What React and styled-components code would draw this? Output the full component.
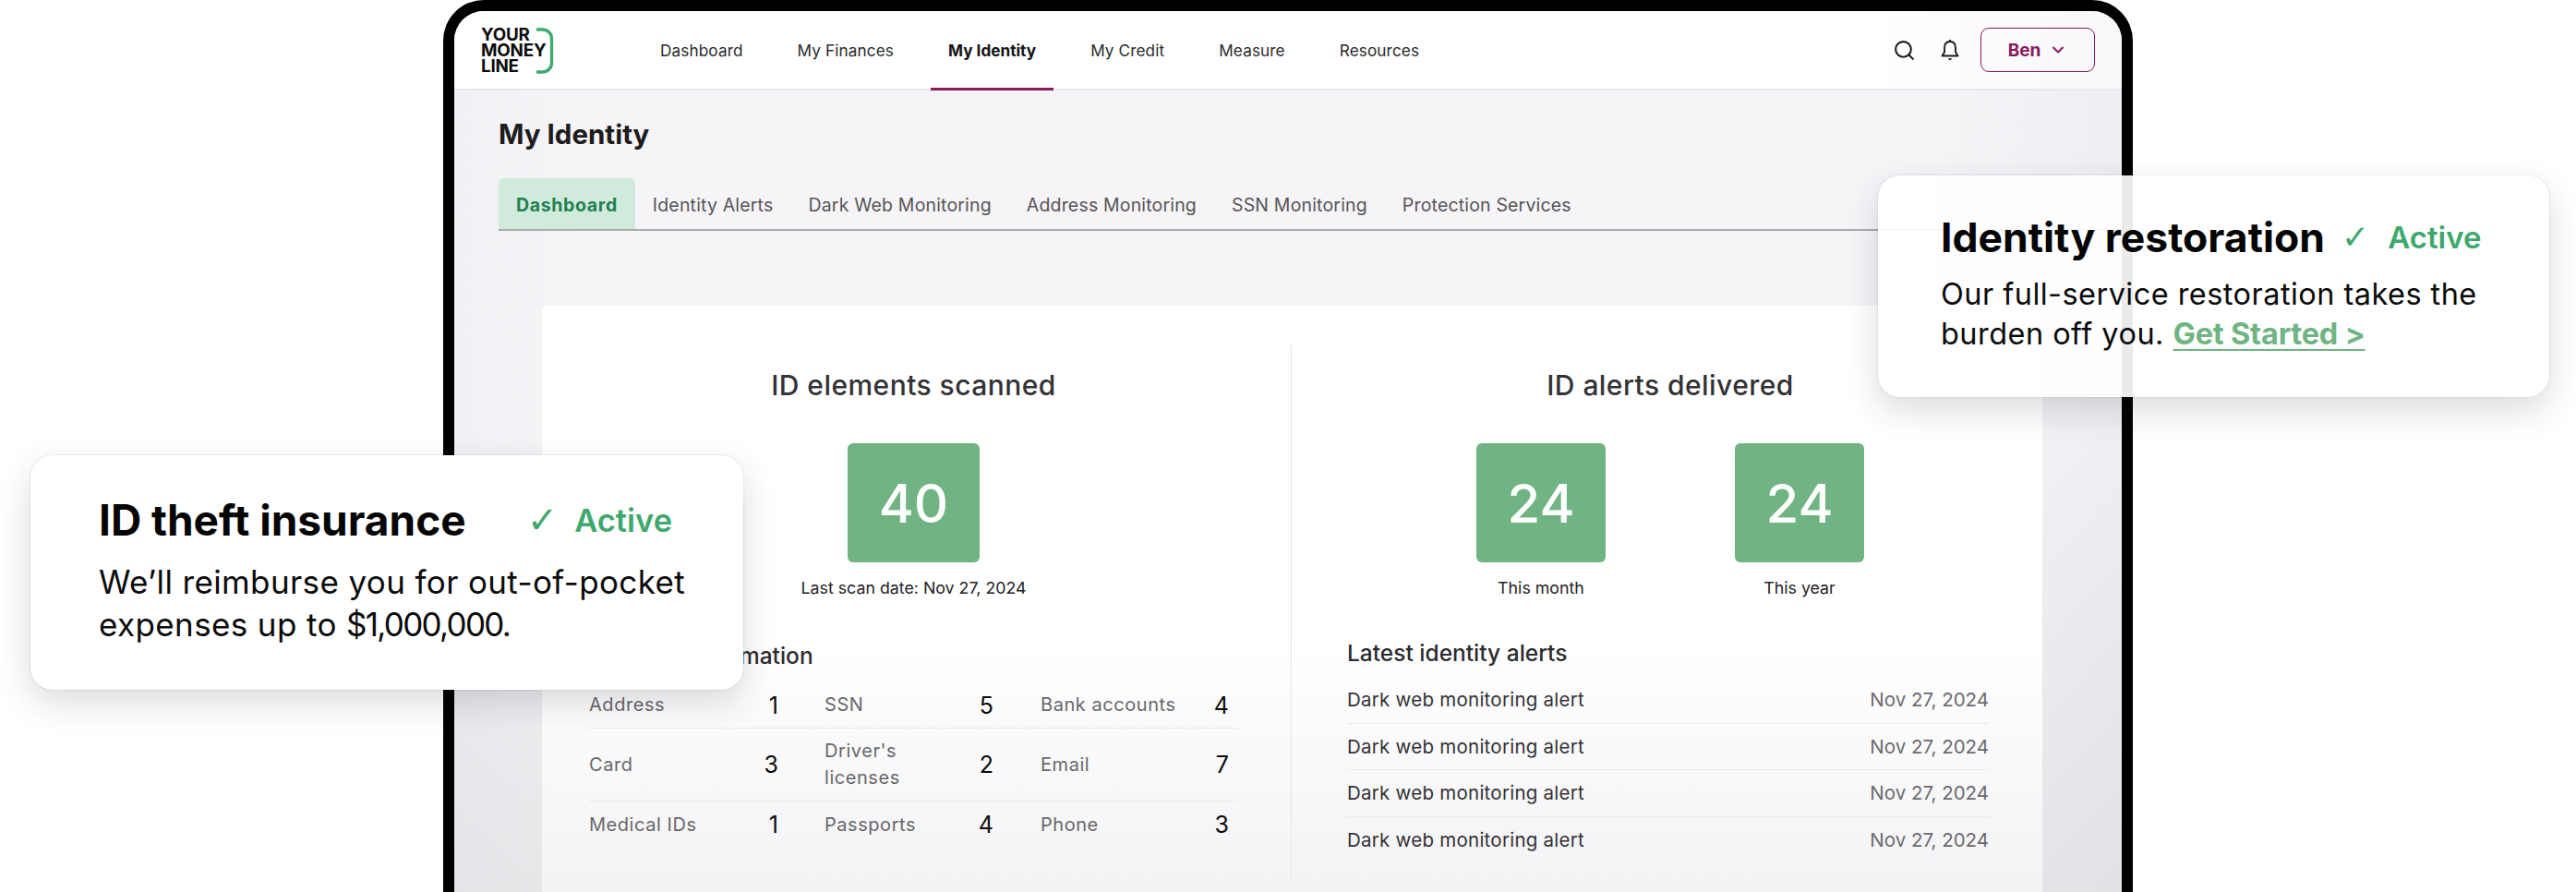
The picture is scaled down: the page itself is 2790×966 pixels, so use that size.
import React from 'react'
import styled, { createGlobalStyle } from 'styled-components'
import { Search, ChevronDown } from 'lucide-react'

const FONT = `Inter, 'Noto Sans', 'Liberation Sans', sans-serif`

const Global = createGlobalStyle`
  html, body { margin: 0; padding: 0; background: #fff; }
  * { box-sizing: border-box; }
  body { font-family: ${FONT}; }
`

const Stage = styled.div`
  position: relative;
  width: 2790px;
  height: 966px;
  overflow: hidden;
  background: #fff;
  padding-left: 480px;
`

const Tablet = styled.div`
  width: 1830px;
  height: 966px;
  border: 12px solid #000;
  border-bottom: 0;
  border-radius: 44px 44px 0 0;
  overflow: hidden;
  background:
    linear-gradient(90deg, rgba(60, 55, 70, 0.02) 0%, rgba(60, 55, 70, 0) 8%, rgba(60, 55, 70, 0) 88%, rgba(60, 55, 70, 0.035) 100%),
    linear-gradient(180deg, #f6f4f7 0%, #f5f4f7 50%, #e8e7ea 100%);
  display: flex;
  flex-direction: column;
`

const Header = styled.header`
  height: 86px;
  flex: none;
  background: linear-gradient(90deg, #fff 0%, #fff 85%, #f8f7fa 100%);
  border-bottom: 2px solid #e9e8ec;
  display: flex;
  align-items: stretch;
  padding: 0 29px;
`

const Logo = styled.div`
  width: 194px;
  flex: none;
  position: relative;
  padding-top: 18px;
  font-size: 18.8px;
  line-height: 16.8px;
  font-weight: 700;
  color: #0c0c0c;
  letter-spacing: -0.2px;
`

const LogoBracket = styled.svg`
  position: absolute;
  left: 59px;
  top: 18px;
`

const Nav = styled.nav`
  display: flex;
  align-items: stretch;
  gap: 59px;
  flex: 1;
`

const NavItem = styled.a`
  display: flex;
  align-items: center;
  padding: 1px ${p => (p.$active ? '19px' : '0')} 0;
  margin: 0 ${p => (p.$active ? '-19px' : '0')} -2px;
  font-size: 17.2px;
  letter-spacing: ${p => (p.$active ? '0' : '0.1px')};
  font-weight: ${p => (p.$active ? 700 : 400)};
  color: ${p => (p.$active ? '#141414' : '#2a2a2a')};
  border-bottom: 3px solid ${p => (p.$active ? '#8a1a5c' : 'transparent')};
  white-space: nowrap;
`

const HeaderActions = styled.div`
  display: flex;
  align-items: center;
  color: #1b1b1b;
`

const IconSlot = styled.span`
  display: flex;
  width: ${p => p.$w}px;
`

const UserButton = styled.button`
  width: 124px;
  height: 48px;
  border: 1.5px solid #8a1a5c;
  border-radius: 9px;
  background: transparent;
  color: #8a1a5c;
  font-family: ${FONT};
  font-size: 19px;
  font-weight: 700;
  display: flex;
  align-items: center;
  justify-content: center;
  gap: 9px;
  padding: 0;
`

const Content = styled.main`
  flex: 1;
  min-height: 0;
  padding: 28px 0 0 48px;
  display: flex;
  flex-direction: column;
`

const PageTitle = styled.h1`
  margin: 0;
  font-size: 29.5px;
  line-height: 38px;
  font-weight: 700;
  color: #1c1c1c;
`

const Tabs = styled.div`
  margin-top: 29px;
  display: flex;
  height: 57px;
  flex: none;
  border-bottom: 2px solid #aaa9ad;
`

const Tab = styled.div`
  display: flex;
  align-items: center;
  height: 55px;
  padding: 2px 19px 0;
  font-size: 19.5px;
  letter-spacing: ${p => (p.$active ? '0.65px' : '0.17px')};
  font-weight: ${p => (p.$active ? 700 : 400)};
  color: ${p => (p.$active ? '#22814f' : '#555458')};
  background: ${p => (p.$active ? '#d0ebdc' : 'transparent')};
  border-radius: 6px 6px 0 0;
  white-space: nowrap;
`

const Panel = styled.section`
  margin: 81px 0 0 47px;
  width: 1625px;
  flex: 1;
  min-height: 0;
  background: linear-gradient(180deg, #fff 0%, #fff 58%, #f3f2f5 100%);
  border-radius: 6px 6px 0 0;
  display: grid;
  grid-template-columns: 812px 813px;
  padding-top: 42px;
`

const Column = styled.div`
  padding: 24px ${p => p.$right}px 0 ${p => p.$left}px;
  margin-bottom: 11px;
  border-right: ${p => (p.$divided ? '1px solid #e6e5e8' : '0')};
`

const ColumnHead = styled.div`
  padding: 0 ${p => p.$right}px 0 ${p => p.$left}px;
`

const ColumnTitle = styled.h2`
  margin: 0;
  text-align: center;
  font-size: 30px;
  letter-spacing: 0.45px;
  line-height: 40px;
  font-weight: 500;
  color: #333236;
`

const StatRow = styled.div`
  display: flex;
  justify-content: center;
  gap: 140px;
  margin-top: 43px;
`

const Stat = styled.div`
  display: flex;
  flex-direction: column;
  align-items: center;
  width: 140px;
`

const StatBox = styled.div`
  width: ${p => p.$w}px;
  height: 129px;
  flex: none;
  background: #6fb482;
  border-radius: 6px;
  color: #fff;
  font-size: 58px;
  font-weight: 500;
  display: flex;
  align-items: center;
  justify-content: center;
`

const StatCaption = styled.div`
  margin-top: 18px;
  font-size: 17.8px;
  line-height: 20px;
  color: #242326;
  white-space: nowrap;
`

const SubTitle = styled.h3`
  margin: ${p => p.$top}px 0 0;
  font-size: 24.5px;
  line-height: 32px;
  font-weight: 500;
  color: #2c2b2f;
`

const InfoGrid = styled.div`
  margin-top: 13px;
  width: 702px;
`

const InfoRow = styled.div`
  display: grid;
  grid-template-columns: 255px 234px 213px;
  height: ${p => p.$h}px;
  align-items: center;
  border-bottom: ${p => (p.$last ? '0' : '1px solid #eae9ec')};
`

const InfoCell = styled.div`
  display: flex;
  align-items: center;
  justify-content: space-between;
  padding-right: ${p => p.$pad}px;
`

const InfoLabel = styled.span`
  font-size: 20px;
  letter-spacing: 0.55px;
  line-height: 29px;
  color: #68676b;
  width: ${p => p.$w}px;
`

const InfoValue = styled.span`
  font-size: 25px;
  color: #0b0b0b;
`

const AlertList = styled.div`
  margin-top: 10px;
`

const AlertRow = styled.div`
  display: flex;
  justify-content: space-between;
  align-items: center;
  height: 50.5px;
  border-bottom: ${p => (p.$last ? '0' : '1px solid #ebeaed')};
  font-size: 20.5px;
  letter-spacing: 0.25px;
  color: #333236;
`

const AlertDate = styled.span`
  color: #6b6a6e;
  letter-spacing: 0;
`

const FloatCard = styled.aside`
  position: absolute;
  left: ${p => p.$x}px;
  top: ${p => p.$y}px;
  width: ${p => p.$w}px;
  height: ${p => p.$h}px;
  padding: ${p => p.$padTop}px 0 0 ${p => p.$padLeft}px;
  background: rgba(255, 255, 255, ${p => p.$alpha});
  border-radius: 24px;
  box-shadow: 0 14px 36px rgba(40, 36, 48, 0.16), 0 0 2px rgba(40, 36, 48, 0.2);
`

const CardHead = styled.div`
  display: flex;
  align-items: center;
`

const CardTitle = styled.h4`
  margin: 0;
  font-size: ${p => p.$size}px;
  line-height: 52px;
  font-weight: 700;
  color: #050505;
  white-space: nowrap;
`

const ActiveBadge = styled.span`
  margin-left: ${p => p.$gap}px;
  display: flex;
  align-items: center;
  gap: ${p => p.$inner}px;
  font-size: ${p => p.$size}px;
  font-weight: 600;
  color: #3fa96d;
`

const CheckGlyph = styled.span`
  font-family: 'DejaVu Sans', sans-serif;
  font-weight: 400;
  font-size: ${p => p.$size}px;
  line-height: 1;
`

const CardText = styled.p`
  margin: ${p => p.$top}px 0 0;
  font-size: ${p => p.$size}px;
  letter-spacing: ${p => p.$spacing}px;
  line-height: ${p => p.$line}px;
  color: #0b0b0b;
  white-space: nowrap;
`

const Amount = styled.span`
  letter-spacing: -1.7px;
`

const CardLink = styled.a`
  font-weight: 700;
  letter-spacing: -0.2px;
  color: #6fb482;
  text-decoration: underline;
  text-underline-offset: 5px;
  text-decoration-thickness: 2px;
`

const BellIcon = () => (
  <svg width="20" height="24" viewBox="0 0 20 24" fill="none">
    <path d="M10 1V3" stroke="#1b1b1b" strokeWidth="2" />
    <path d="M10 3C5.6 3 4 6.5 4 10V14.5L1.5 18.5H18.5L16 14.5V10C16 6.5 14.4 3 10 3Z" stroke="#1b1b1b" strokeWidth="1.9" strokeLinejoin="round" />
    <path d="M7.5 21.2H12.5L10 23.6Z" fill="#1b1b1b" />
  </svg>
)

const navItems = ['Dashboard', 'My Finances', 'My Identity', 'My Credit', 'Measure', 'Resources']
const tabs = ['Dashboard', 'Identity Alerts', 'Dark Web Monitoring', 'Address Monitoring', 'SSN Monitoring', 'Protection Services']
const info = [
  [['Address', 1], ['SSN', 5], ['Bank accounts', 4]],
  [['Card', 3], ["Driver's licenses", 2], ['Email', 7]],
  [['Medical IDs', 1], ['Passports', 4], ['Phone', 3]],
]
const rowHeights = [50, 79, 50]
const cellPad = [50, 51, 9]
const labelWidth = [170, 110, 170]

export default function App() {
  return (
    <Stage>
      <Global />
      <Tablet>
        <Header>
          <Logo>
            YOUR<br />MONEY<br />LINE
            <LogoBracket width="20" height="50" viewBox="0 0 20 50" fill="none">
              <path d="M1 2H7C13 2 17.5 6 17.5 12V38C17.5 44 13 48 7 48H1" stroke="#3dab72" strokeWidth="3.4" />
            </LogoBracket>
          </Logo>
          <Nav>
            {navItems.map(n => (
              <NavItem key={n} $active={n === 'My Identity'}>{n}</NavItem>
            ))}
          </Nav>
          <HeaderActions>
            <IconSlot $w={52}><Search size={25} strokeWidth={2} /></IconSlot>
            <IconSlot $w={43}><BellIcon /></IconSlot>
            <UserButton>Ben <ChevronDown size={20} strokeWidth={2.4} /></UserButton>
          </HeaderActions>
        </Header>
        <Content>
          <PageTitle>My Identity</PageTitle>
          <Tabs>
            {tabs.map((t, i) => (
              <Tab key={t} $active={i === 0}>{t}</Tab>
            ))}
          </Tabs>
          <Panel>
            <Column $left={51} $right={51} $divided>
              <ColumnHead $left={0} $right={6}>
                <ColumnTitle>ID elements scanned</ColumnTitle>
                <StatRow>
                  <Stat>
                    <StatBox $w={143}>40</StatBox>
                    <StatCaption>Last scan date: Nov 27, 2024</StatCaption>
                  </Stat>
                </StatRow>
              </ColumnHead>
              <SubTitle $top={47}>Personal information</SubTitle>
              <InfoGrid>
                {info.map((row, r) => (
                  <InfoRow key={r} $h={rowHeights[r]} $last={r === 2}>
                    {row.map(([label, value], c) => (
                      <InfoCell key={label} $pad={cellPad[c]}>
                        <InfoLabel $w={labelWidth[c]}>{label}</InfoLabel>
                        <InfoValue>{value}</InfoValue>
                      </InfoCell>
                    ))}
                  </InfoRow>
                ))}
              </InfoGrid>
            </Column>
            <Column $left={60} $right={58}>
              <ColumnHead $left={5} $right={0}>
                <ColumnTitle>ID alerts delivered</ColumnTitle>
                <StatRow>
                  <Stat>
                    <StatBox $w={140}>24</StatBox>
                    <StatCaption>This month</StatCaption>
                  </Stat>
                  <Stat>
                    <StatBox $w={140}>24</StatBox>
                    <StatCaption>This year</StatCaption>
                  </Stat>
                </StatRow>
              </ColumnHead>
              <SubTitle $top={44}>Latest identity alerts</SubTitle>
              <AlertList>
                {[0, 1, 2, 3].map(i => (
                  <AlertRow key={i} $last={i === 3}>
                    <span>Dark web monitoring alert</span>
                    <AlertDate>Nov 27, 2024</AlertDate>
                  </AlertRow>
                ))}
              </AlertList>
            </Column>
          </Panel>
        </Content>
      </Tablet>

      <FloatCard $x={2034} $y={190} $w={727} $h={240} $padTop={41} $padLeft={68} $alpha={0.92}>
        <CardHead>
          <CardTitle $size={44.5}>Identity restoration</CardTitle>
          <ActiveBadge $gap={18} $inner={20} $size={33}><CheckGlyph $size={36}>✓</CheckGlyph>Active</ActiveBadge>
        </CardHead>
        <CardText $top={14} $size={32.5} $spacing={0.45} $line={43}>
          Our full-service restoration takes the<br />burden off you. <CardLink>Get Started &gt;</CardLink>
        </CardText>
      </FloatCard>

      <FloatCard $x={33} $y={493} $w={772} $h={254} $padTop={44} $padLeft={74} $alpha={1}>
        <CardHead>
          <CardTitle $size={46}>ID theft insurance</CardTitle>
          <ActiveBadge $gap={66} $inner={18} $size={34.5}><CheckGlyph $size={40}>✓</CheckGlyph>Active</ActiveBadge>
        </CardHead>
        <CardText $top={18} $size={35} $spacing={0.38} $line={46}>
          We’ll reimburse you for out-of-pocket<br />expenses up to <Amount>$1,000,000.</Amount>
        </CardText>
      </FloatCard>
    </Stage>
  )
}
